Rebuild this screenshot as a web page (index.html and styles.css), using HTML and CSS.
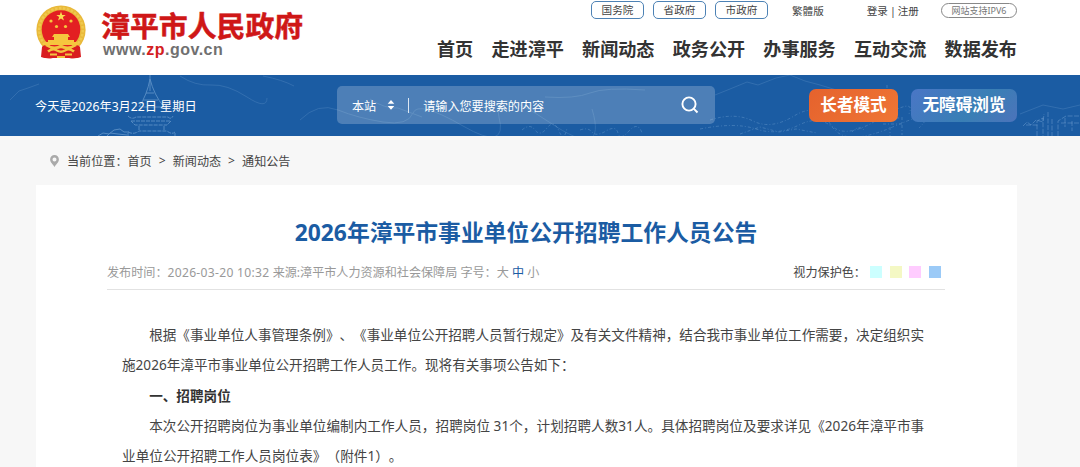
FILE: index.html
```
<!DOCTYPE html>
<html lang="zh-CN">
  <head>
    <meta charset="utf-8">
    <title>2026年漳平市事业单位公开招聘工作人员公告</title>
    <link rel="stylesheet" href="styles.css">
  </head>

  <body>
    <header class="header wrap">
      <a class="logo">
        <svg class="emblem" viewBox="0 0 50 54" width="50" height="54">
          <path d="M7 39 L6 52 Q12 54 17 53 L33 53 Q38 54 44 52 L43 39 Z" fill="#cf1a1c"/>
          <circle cx="25" cy="25" r="24.6" fill="#e9b93a"/>
          <circle cx="25" cy="25" r="21.8" fill="none" stroke="#f0c94e" stroke-width="2.5" stroke-dasharray="2.5 1.5"/>
          <circle cx="25" cy="24.5" r="19.3" fill="#e31f22"/>
          <path d="M25 6.5 l1.2 3.4 3.5 0 -2.8 2.1 1 3.4 -2.9 -2 -2.9 2 1 -3.4 -2.8 -2.1 3.5 0z" fill="#fbdc50"/>
          <g fill="#f6c63e">
            <circle cx="15" cy="16" r="1.6"/><circle cx="20.5" cy="21.5" r="1.6"/>
            <circle cx="29.5" cy="21.5" r="1.6"/><circle cx="35" cy="16" r="1.6"/>
            <path d="M18 29 h14 l2 3 H16z M18 32 h14 v3 H18z M12 35 h26 v3 H12z M9 37 h32 l2 3 H7z"/>
          </g>
          <path d="M6 42 Q8 39 11 41 L15 44 H35 L39 41 Q42 39 44 42 L45 52 Q39 54 34 53 H16 Q11 54 5 52z" fill="#d91c1f"/>
          <path d="M10 40 Q18 45 25 41 Q32 45 40 40 M12 46.5 Q17 42.5 21 45.5 Q25 48 29 45.5 Q33 42.5 38 46.5" fill="none" stroke="#f3c440" stroke-width="2.6"/>
          <path d="M14 49.5 H21 M29 49.5 H36 M21 52 h8" stroke="#f3c440" stroke-width="2"/>
        </svg>
        <span class="logo-text">
          <b class="site-name">漳平市人民政府</b>
          <span class="site-url">www.<i>zp</i>.gov.cn</span>
        </span>
      </a>

      <div class="header-right">
        <div class="top-links">
          <a class="gov-link">国务院</a>
          <a class="gov-link">省政府</a>
          <a class="gov-link">市政府</a>
          <a class="trad">繁體版</a>
          <span class="login">登录 | 注册</span>
          <span class="ipv6">网站支持IPV6</span>
        </div>
        <nav class="nav">
          <a>首页</a>
          <a>走进漳平</a>
          <a>新闻动态</a>
          <a>政务公开</a>
          <a>办事服务</a>
          <a>互动交流</a>
          <a>数据发布</a>
        </nav>
      </div>
    </header>

    <div class="banner">
      <!-- line drawing behind the search bar -->
      <svg class="skyline" viewBox="0 0 1080 61" width="1080" height="61" fill="none" stroke="#8fb9e2" stroke-width="1">
        <g opacity=".5">
          <path d="M150 0 V16 M150 4 Q147 20 139 32 M150 4 Q154 20 164 32 M146 18 h8 M143 25 h15 M140 32 h25"/>
          <path d="M128 41 Q132 45 136 42 H168 Q171 45 173 41 M131 46 H171 L167 50 H135z M139 51 V56 M164 51 V56 M128 57 Q134 60 139 56 H167 Q172 60 175 57 M128 61 V58 M175 61 V58" stroke-dasharray="4 1"/>
          <path d="M98 61 l5 -3 6 1 5 -4 6 -1 4 3 5 0 M107 61 l3 -3 8 1 9 1"/>
        </g>
        <g opacity=".2">
          <path d="M10 25 l9 -9 9 -3 11 -4 M180 1 q15 10 31 9 t36 12 20 1 M263 1 q20 4 31 10 M300 45 q18 -18 38 -10 t45 12 30 -9 50 13 36 -9 50 5 43 -13"/>
          <path d="M370 24 q15 10 28 9 l24 9 M545 22 q30 2 45 -4 t55 -3 M715 20 l15 -6 17 -7 11 3 18 -7 14 -3 15 6 15 4 23 7 M1020 39 l23 -9 20 4 17 -4"/>
        </g>
        <g opacity=".3" stroke-dasharray="3 2 1 2">
          <path d="M522 55 q8 -7 13 0 t12 -2 12 3 8 -3 M580 55 q8 -3 12 2 t14 -1 12 2 11 -2 13 2 M710 45 q25 -8 43 1 t41 -5 35 6 50 -3 30 -5 M700 54 q35 -7 56 0 t43 -4 36 5 60 -4 24 2 M740 59 l20 -7 19 5 17 -3 21 4 M852 57 q7 -8 13 -1"/>
          <path d="M887 10 v14 M888 19 l6 17 M880 43 h20 M883 49 h20 M890 52 v9 M902 42 v18"/>
        </g>
        <g opacity=".36" stroke-dasharray="5 1.5">
          <path d="M1023 51 l4 -4 4 3 5 -5 7 2 1 -8 M1026 50 h13 M1037 61 v-15 l6 -3 v18 M1048 37 v24 M1052 44 v17 M1058 61 v-15 l8 -5 h14 M1061 48 h18 M1065 43 v9 M1072 46 v10"/>
        </g>
      </svg>
      <div class="wrap banner-row">
        <span class="today">今天是2026年3月22日 星期日</span>
        <div class="search">
          <span class="scope">本站</span>
          <svg class="sort" width="8" height="10" viewBox="0 0 8 10"><path d="M4 0 L7.3 3.7 H.7z M.7 6 H7.3 L4 9.7z" fill="#fff"/></svg>
          <span class="bar"></span>
          <span class="hint">请输入您要搜索的内容</span>
          <svg class="magnifier" width="18" height="18" viewBox="0 0 18 18" fill="none" stroke="#fff" stroke-width="1.9"><circle cx="8" cy="8" r="6.6"/><path d="M12.7 12.7 L16.5 16.5"/></svg>
        </div>
        <a class="mode elder">长者模式</a>
        <a class="mode access">无障碍浏览</a>
      </div>
    </div>

    <div class="wrap crumbs">
      <svg width="9" height="12" viewBox="0 0 9 12"><path fill="#aaa" fill-rule="evenodd" d="M4.5 0 A4.4 4.4 0 0 0 .1 4.5 C.1 7.4 3 9.2 4.5 12 C6 9.2 8.9 7.4 8.9 4.5 A4.4 4.4 0 0 0 4.5 0z M4.5 2.5 a2 2 0 1 1 0 4 a2 2 0 0 1 0 -4z"/></svg>
      <span class="here">当前位置：</span><a>首页</a><i>&gt;</i><a>新闻动态</a><i>&gt;</i><a>通知公告</a>
    </div>

    <main class="wrap article">
      <h1>2026年漳平市事业单位公开招聘工作人员公告</h1>
      <div class="meta">
        <span class="info">发布时间：<span class="time">2026-03-20 10:32</span> 来源:漳平市人力资源和社会保障局 字号：大 <b>中</b> 小</span>
        <span class="eye">视力保护色：</span>
        <span class="swatch cyan"></span>
        <span class="swatch yellow"></span>
        <span class="swatch pink"></span>
        <span class="swatch blue"></span>
      </div>
      <div class="content">
        <p>根据《事业单位人事管理条例》、《事业单位公开招聘人员暂行规定》及有关文件精神，结合我市事业单位工作需要，决定组织实<br>施2026年漳平市事业单位公开招聘工作人员工作。现将有关事项公告如下：</p>
        <p><b>一、招聘岗位</b></p>
        <p class="jobs">本次公开招聘岗位为事业单位编制内工作人员，招聘岗位 31个，计划招聘人数31人。具体招聘岗位及要求详见《2026年漳平市事<br>业单位公开招聘工作人员岗位表》（附件1）。</p>
      </div>
    </main>
  </body>
</html>
```
FILE: styles.css
```
* {
  box-sizing: border-box;
}

body {
  margin: 0;
  height: 467px;
  overflow: hidden;
  font-family: "Noto Sans", "Noto Sans CJK SC", sans-serif;
  font-size: 12px;
  color: #444;
  background: #f7f7f7;
  white-space: nowrap;
  text-spacing-trim: space-all;
}

i {
  font-style: normal;
}

.wrap {
  width: 981px;
  margin-left: 36px;
}

.header {
  display: flex;
  justify-content: space-between;
  height: 75px;
  position: relative;
  box-shadow: 0 0 0 100vmax #fff;
  background: #fff;
  clip-path: inset(0 -100vmax 0 -100vmax);
}

.logo {
  display: flex;
  gap: 15px;
  padding-top: 5px;
}

.logo-text {
  display: flex;
  flex-direction: column;
  padding-top: 4px;
}

.site-name {
  font-family: "Noto Sans CJK SC", sans-serif;
  font-size: 28.9px;
  line-height: 30px;
  color: #cf1717;
  -webkit-text-stroke: 0.5px #cf1717;
}

.site-url {
  margin: 3px 0 0 2px;
  font: bold 16px/16px "Liberation Sans", sans-serif;
  letter-spacing: 0.5px;
  color: #707070;
}

.site-url i {
  color: #d3201f;
}

.header-right {
  width: 580px;
}

.top-links {
  display: flex;
  align-items: center;
  height: 20px;
  margin-left: 154px;
  font-size: 10.6px;
}

.gov-link {
  width: 53px;
  height: 18px;
  margin-right: 9px;
  border: 1px solid #4d82b5;
  border-radius: 5px;
  line-height: 16px;
  text-align: center;
}

.trad {
  margin-left: 15px;
}

.login {
  margin-left: 43px;
  word-spacing: -0.8px;
}

.ipv6 {
  width: 76px;
  height: 15px;
  margin-left: auto;
  border: 1px solid #888;
  border-radius: 8px;
  font-size: 9px;
  line-height: 13px;
  text-align: center;
  color: #777;
}

.nav {
  display: flex;
  justify-content: space-between;
  margin-top: 16px;
  font-size: 18.1px;
  font-weight: bold;
  line-height: 27px;
  color: #333;
}

.banner {
  position: relative;
  height: 61px;
  background: #1b5ca3;
}

.skyline {
  position: absolute;
  top: 0;
  left: 0;
}

.banner-row {
  display: flex;
  align-items: center;
  position: relative;
  height: 60px;
  color: #fff;
}

.today {
  width: 301px;
  margin-left: -1px;
  padding-top: 2px;
  font-size: 12.2px;
}

.search {
  display: flex;
  align-items: center;
  width: 378px;
  height: 38px;
  margin-left: 1px;
  padding: 0 16px 0 15px;
  border-radius: 5px;
  background: rgba(255, 255, 255, 0.22);
  font-size: 12.1px;
}

.scope,
.hint {
  padding-top: 2px;
}

.sort {
  margin-left: 11px;
}

.bar {
  width: 1px;
  height: 15px;
  margin: 0 14px 0 13px;
  background: #dce7f3;
}

.magnifier {
  margin-left: auto;
}

.mode {
  height: 33px;
  border-radius: 7px;
  font-size: 16.6px;
  font-weight: bold;
  line-height: 31px;
  text-align: center;
}

.elder {
  width: 89px;
  margin-left: 94px;
  background: linear-gradient(135deg, #e5622d, #ef7635);
}

.access {
  width: 106px;
  margin-left: 13px;
  background: linear-gradient(135deg, #4a76c6, #397fb5 60%, #4c73bb);
}

.crumbs {
  display: flex;
  align-items: center;
  height: 49px;
  padding-left: 14px;
  font-size: 12.1px;
}

.here {
  margin-left: 8px;
}

.crumbs i {
  width: 21px;
  text-align: center;
}

.article {
  height: 282px;
  padding: 0 72px 0 71px;
  background: #fff;
}

h1 {
  margin: 0;
  padding-top: 30px;
  font-size: 22.8px;
  line-height: 35px;
  text-align: center;
  color: #1b5ca3;
}

.meta {
  display: flex;
  align-items: center;
  height: 40px;
  border-bottom: 1px solid #e2e2e2;
  padding-right: 4px;
  padding-top: 5px;
  font-size: 12.1px;
}

.info {
  color: #999;
}

.time {
  letter-spacing: 0.3px;
}

.info b {
  font-weight: normal;
  color: #1b5ca3;
}

.eye {
  margin-left: auto;
}

.swatch {
  width: 12px;
  height: 12px;
  margin-left: 7.7px;
}

.cyan {
  margin-left: 4px;
  background: #cff;
}

.yellow {
  background: #f4f8c4;
}

.pink {
  background: #fcf;
}

.blue {
  background: #9bcaf7;
}

.content {
  padding: 30px 0 0 15px;
  font-size: 13.6px;
  line-height: 30.3px;
}

.content p {
  margin: 0;
  text-indent: 2em;
}

.content .jobs {
  letter-spacing: 0.04px;
}

.content b {
  color: #333;
}
```
